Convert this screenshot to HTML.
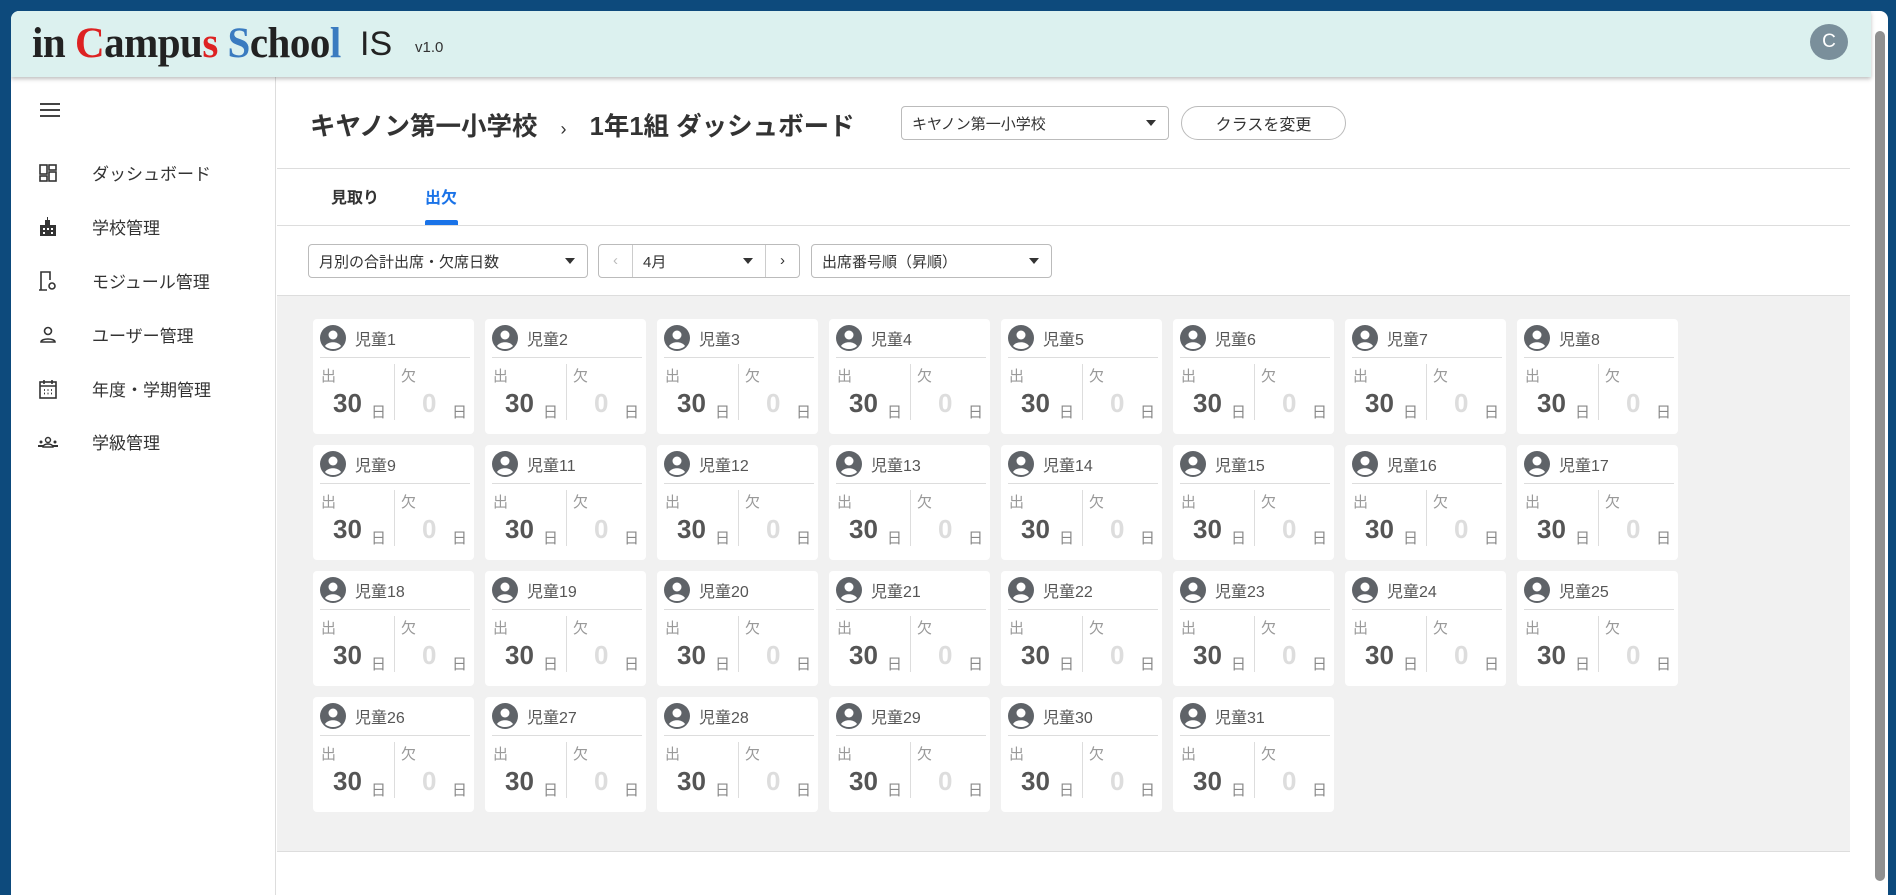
<!DOCTYPE html>
<html><head><meta charset="utf-8"><style>
*{box-sizing:border-box;margin:0;padding:0}
body{width:1896px;height:895px;overflow:hidden;background:#0d4a7c;font-family:"Liberation Sans","Noto Sans CJK JP",sans-serif;position:relative;color:#333}
.win{position:absolute;left:11px;top:11px;width:1877px;height:884px;background:#fff;border-radius:8px 8px 0 0;overflow:hidden}
.hdr{position:absolute;left:0;top:0;width:1860px;height:66px;background:#dcf1ef;box-shadow:0 2px 4px rgba(0,0,0,.25);z-index:2}
.logo{position:absolute;left:21px;top:6px;font-family:"Liberation Serif",serif;font-weight:bold;font-size:41px;color:#222;letter-spacing:-0.5px;transform:scaleY(1.05);transform-origin:left top}
.is{position:absolute;left:349px;top:14px;font-size:34px;font-weight:300;color:#222}
.ver{position:absolute;left:404px;top:28px;font-size:15px;color:#333}
.av{position:absolute;left:1799px;top:13px;width:38px;height:36px;border-radius:50%;background:#7a8f9b;color:#fff;font-size:19px;text-align:center;line-height:36px}
.side{position:absolute;left:0;top:66px;width:265px;height:818px;border-right:1px solid #ddd}
.ham{position:absolute;left:29px;top:26px;width:20px}
.ham i{display:block;height:2px;background:#444;margin-bottom:4px}
.nav{position:absolute;left:26px;font-size:17px;color:#333;display:flex;align-items:center}
.nav svg{width:22px;height:22px;margin-right:33px}
.sb{position:absolute;left:1864px;top:20px;width:10px;height:850px;background:#909090;border-radius:5px}
.main{position:absolute;left:266px;top:42px;width:1573px;height:842px}
.title{position:absolute;left:33px;top:53px;font-size:25.5px;font-weight:bold;color:#333}
.sel{position:absolute;border:1px solid #bbb;border-radius:4px;font-size:15px;color:#333;padding-left:10px;display:flex;align-items:center}
.tri{position:absolute;right:12px;top:50%;margin-top:-3px;border:5px solid transparent;border-top:6px solid #333;border-bottom:0}
.line{position:absolute;left:0;width:1573px;height:1px;background:#ddd}
.grey{position:absolute;left:0;top:242px;width:1573px;height:557px;background:#f1f1f1;border-top:1px solid #ddd;border-bottom:1px solid #ddd}
.card{position:absolute;width:161px;height:115px;background:#fff;border-radius:4px}
.card svg{position:absolute;left:7px;top:6px}
.nm{position:absolute;left:42px;top:7px;font-size:16px;color:#555}
.dv{position:absolute;left:7px;right:4px;top:38px;height:1px;background:#ddd}
.vd{position:absolute;left:81px;top:45px;width:1px;height:56px;background:#ddd}
.lb{position:absolute;top:46px;font-size:15px;color:#999}
.n{position:absolute;top:69px;font-size:26px;font-weight:bold}
.d{position:absolute;top:82px;font-size:15px;color:#888}
</style></head><body>
<div class="win">
<div class="hdr">
<div class="logo"><span style="color:#222">in</span> <span style="color:#d22">C</span>ampu<span style="color:#d22">s</span> <span style="color:#3a7bc0">S</span>choo<span style="color:#3a7bc0">l</span></div>
<div class="is">IS</div><div class="ver">v1.0</div>
<div class="av">C</div>
</div>
<div class="side">
<div class="ham"><i></i><i></i><i></i></div>
<div class="nav" style="top:83px"><svg viewBox="0 0 22 22" fill="none" stroke="#333" stroke-width="1.6"><rect x="3" y="3" width="7" height="9"/><rect x="12" y="3" width="7" height="5"/><rect x="3" y="14" width="7" height="5"/><rect x="12" y="10" width="7" height="9"/></svg>ダッシュボード</div>
<div class="nav" style="top:137px"><svg viewBox="0 0 22 22" fill="#333"><rect x="3" y="9" width="16" height="11"/><rect x="8" y="4" width="5" height="6"/><rect x="10" y="1" width="1" height="3"/><rect x="6" y="12" width="2" height="2" fill="#fff"/><rect x="10" y="12" width="2" height="2" fill="#fff"/><rect x="14" y="12" width="2" height="2" fill="#fff"/><rect x="6" y="16" width="2" height="2" fill="#fff"/><rect x="14" y="16" width="2" height="2" fill="#fff"/></svg>学校管理</div>
<div class="nav" style="top:191px"><svg viewBox="0 0 22 22" fill="none" stroke="#333" stroke-width="1.6"><path d="M4 20V2h9v8M2 20h8"/><circle cx="15" cy="16" r="3"/></svg>モジュール管理</div>
<div class="nav" style="top:245px"><svg viewBox="0 0 22 22" fill="none" stroke="#333" stroke-width="1.6"><circle cx="11" cy="7" r="3.5"/><path d="M4 18c0-4 14-4 14 0z"/></svg>ユーザー管理</div>
<div class="nav" style="top:299px"><svg viewBox="0 0 22 22" fill="none" stroke="#333" stroke-width="1.6"><rect x="3" y="4" width="16" height="16"/><path d="M3 8h16M7 2v4M15 2v4"/><path d="M7 12h1M10.5 12h1M14 12h1M7 15.5h1M10.5 15.5h1M14 15.5h1" stroke-width="1.8"/></svg>年度・学期管理</div>
<div class="nav" style="top:352px"><svg viewBox="0 0 22 22" fill="#333"><circle cx="11" cy="9" r="2.5" fill="none" stroke="#333" stroke-width="1.4"/><path d="M6 16c0-4 10-4 10 0z" fill="none" stroke="#333" stroke-width="1.4"/><circle cx="4" cy="11" r="1.5"/><circle cx="18" cy="11" r="1.5"/><rect x="1" y="14" width="5" height="2"/><rect x="16" y="14" width="5" height="2"/></svg>学級管理</div>
</div>
<div class="main">
<div class="title">キヤノン第一小学校 <span style="font-weight:normal;font-size:18px;margin:0 16px">›</span> 1年1組 ダッシュボード</div>
<div class="sel" style="left:624px;top:53px;width:268px;height:34px">キヤノン第一小学校<span class="tri"></span></div>
<div class="sel" style="left:904px;top:53px;width:165px;height:34px;border-radius:17px;justify-content:center;padding:0;font-size:16px">クラスを変更</div>
<div class="line" style="top:115px"></div>
<div style="position:absolute;left:54px;top:131px;font-size:16px;font-weight:bold;color:#333">見取り</div>
<div style="position:absolute;left:148px;top:131px;font-size:16px;font-weight:bold;color:#1a73e8">出欠</div>
<div style="position:absolute;left:148px;top:167px;width:33px;height:5px;background:#1a73e8;border-radius:2px 2px 0 0"></div>
<div class="line" style="top:172px"></div>
<div class="sel" style="left:31px;top:191px;width:280px;height:34px">月別の合計出席・欠席日数<span class="tri"></span></div>
<div class="sel" style="left:321px;top:191px;width:202px;height:34px;padding:0">
<span style="width:34px;height:100%;border-right:1px solid #ccc;color:#bbb;text-align:center;line-height:32px">‹</span>
<span style="padding-left:10px">4月</span><span class="tri" style="right:46px"></span>
<span style="position:absolute;right:0;width:34px;height:100%;border-left:1px solid #ccc;text-align:center;line-height:32px">›</span></div>
<div class="sel" style="left:534px;top:191px;width:241px;height:34px">出席番号順（昇順）<span class="tri"></span></div>
<div class="grey" id="g"></div>
</div>
<div class="sb"></div>
</div>
<script>
var names=[1,2,3,4,5,6,7,8,9,11,12,13,14,15,16,17,18,19,20,21,22,23,24,25,26,27,28,29,30,31];
var g=document.getElementById('g'),h='';
names.forEach(function(n,i){var c=i%8,r=Math.floor(i/8);
h+='<div class="card" style="left:'+(36+c*172)+'px;top:'+(23+r*126)+'px"><svg width="26" height="26" viewBox="0 0 26 26"><circle cx="13" cy="13" r="13" fill="#5f6368"/><circle cx="13" cy="10" r="4.5" fill="#fff"/><path d="M5 21c3-5 13-5 16 0c-4 4-12 4-16 0z" fill="#fff"/></svg><div class="nm">児童'+n+'</div><div class="dv"></div><div class="vd"></div><div class="lb" style="left:8px">出</div><div class="lb" style="left:88px">欠</div><div class="n" style="left:20px;color:#555">30</div><div class="d" style="left:58px">日</div><div class="n" style="left:109px;color:#ddd">0</div><div class="d" style="left:139px">日</div></div>';});
g.innerHTML=h;
</script>
</body></html>
